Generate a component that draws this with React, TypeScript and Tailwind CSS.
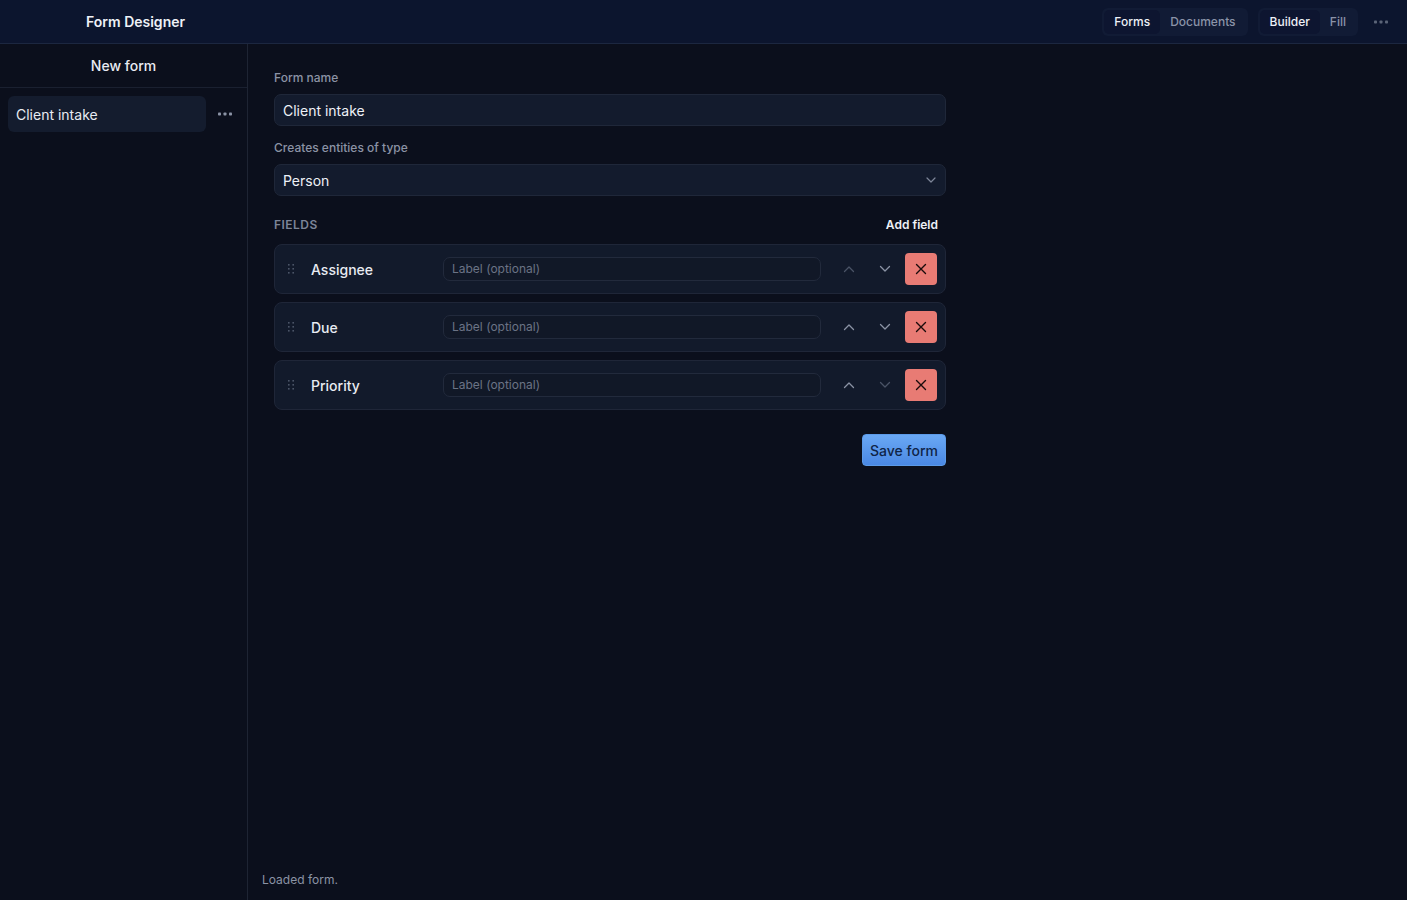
import React from "react";

const font = { fontFamily: "Inter, 'Noto Sans', sans-serif" };

function Dots({ className = "" }: { className?: string }) {
  return (
    <svg width="14" height="4" viewBox="0 0 14 4" className={className}>
      <rect x="0" y="0.5" width="3" height="3" rx="0.8" fill="currentColor" />
      <rect x="5.5" y="0.5" width="3" height="3" rx="0.8" fill="currentColor" />
      <rect x="11" y="0.5" width="3" height="3" rx="0.8" fill="currentColor" />
    </svg>
  );
}

function Grip() {
  return (
    <svg width="6" height="11" viewBox="0 0 6 11" className="text-[#4b5568]">
      {[0, 4, 8].map((y) => (
        <g key={y}>
          <rect x="0" y={y} width="1.6" height="1.6" fill="currentColor" />
          <rect x="4.4" y={y} width="1.6" height="1.6" fill="currentColor" />
        </g>
      ))}
    </svg>
  );
}

function Chevron({ up, dim }: { up?: boolean; dim?: boolean }) {
  return (
    <svg width="12" height="8" viewBox="0 0 12 8" className={dim ? "text-[#4a5366]" : "text-[#8b93a5]"}>
      <path d={up ? "M1.5 6.5 L6 2 L10.5 6.5" : "M1.5 1.5 L6 6 L10.5 1.5"} fill="none" stroke="currentColor" strokeWidth="1.3" strokeLinecap="round" strokeLinejoin="round" />
    </svg>
  );
}

function XIcon() {
  return (
    <svg width="12" height="12" viewBox="0 0 12 12">
      <path d="M1.5 1.5 L10.5 10.5 M10.5 1.5 L1.5 10.5" stroke="#1a0b0b" strokeWidth="1.4" strokeLinecap="round" />
    </svg>
  );
}

function FieldRow({ name, upDim, downDim }: { name: string; upDim?: boolean; downDim?: boolean }) {
  return (
    <div className="flex h-[50px] items-center rounded-[8px] border border-[#1f2638] bg-[#121a2b] pl-[13px] pr-[8px]">
      <Grip />
      <div className="ml-[17px] w-[132px] text-[14px] font-medium text-[#e8ebf2]">{name}</div>
      <div className="flex h-[24px] w-[378px] items-center rounded-[7px] border border-[#222a3c] bg-[#111827] px-[8px] text-[12px] text-[#6b7385]">
        Label (optional)
      </div>
      <div className="ml-auto flex items-center">
        <div className="flex h-[32px] w-[36px] items-center justify-center"><Chevron up dim={upDim} /></div>
        <div className="mr-[2px] flex h-[32px] w-[36px] items-center justify-center"><Chevron dim={downDim} /></div>
        <div className="flex h-[32px] w-[32px] items-center justify-center rounded-[4px] bg-[#e87b74]"><XIcon /></div>
      </div>
    </div>
  );
}

export default function App() {
  return (
    <div style={font} className="flex h-[900px] w-full flex-col bg-[#0b0f1c] text-white">
      <header className="flex h-[44px] shrink-0 items-center border-b border-[#1c2740] bg-[#0c152e] pl-[86px] pr-[19px]">
        <div className="text-[14px] font-semibold text-[#eef1f7]">Form Designer</div>
        <div className="ml-auto flex items-center gap-[10px]">
          <div className="flex h-[28px] items-center rounded-[6px] bg-[#111b35] p-[2px] text-[12px] font-medium">
            <div className="flex h-full items-center rounded-[5px] bg-[#0d1530] px-[10px] text-[#eef1f7]">Forms</div>
            <div className="flex h-full items-center px-[10px] text-[#8a93a8]">Documents</div>
          </div>
          <div className="flex h-[28px] items-center rounded-[6px] bg-[#111b35] p-[2px] text-[12px] font-medium">
            <div className="flex h-full items-center rounded-[5px] bg-[#0d1530] px-[10px] text-[#eef1f7]">Builder</div>
            <div className="flex h-full items-center px-[10px] text-[#8a93a8]">Fill</div>
          </div>
          <Dots className="ml-[6px] text-[#5b6478]" />
        </div>
      </header>
      <div className="flex min-h-0 flex-1">
        <aside className="flex w-[248px] shrink-0 flex-col border-r border-[#1e2433] bg-[#0b0f1c]">
          <div className="flex h-[44px] items-center justify-center border-b border-[#1a2030] text-[14px] font-medium text-[#e8ebf2]">
            New form
          </div>
          <div className="flex items-center px-[8px] pt-[8px]">
            <div className="flex h-[36px] w-[198px] items-center rounded-[6px] bg-[#141c2e] px-[8px] text-[14px] text-[#e8ebf2]">
              Client intake
            </div>
            <Dots className="ml-[12px] text-[#8b93a5]" />
          </div>
        </aside>
        <main className="flex min-w-0 flex-1 flex-col bg-[#0b0f1c]">
          <div className="flex-1 pl-[26px] pt-[25px]">
            <div className="flex w-[672px] flex-col">
              <div className="text-[12px] font-medium text-[#8b93a5]">Form name</div>
              <div className="mt-[7px] flex h-[32px] items-center rounded-[7px] border border-[#1f2739] bg-[#131b2d] px-[8px] text-[14px] text-[#eef1f7]">
                Client intake
              </div>
              <div className="mt-[13px] text-[12px] font-medium text-[#8b93a5]">Creates entities of type</div>
              <div className="mt-[7px] flex h-[32px] items-center rounded-[7px] border border-[#1f2739] bg-[#131b2d] pl-[8px] pr-[9px] text-[14px] text-[#eef1f7]">
                Person
                <svg width="10" height="6" viewBox="0 0 10 6" className="ml-auto text-[#7d8598]">
                  <path d="M1 1 L5 5 L9 1" fill="none" stroke="currentColor" strokeWidth="1.2" strokeLinecap="round" strokeLinejoin="round" />
                </svg>
              </div>
              <div className="mt-[20px] flex items-center justify-between pr-[8px]">
                <div className="text-[12px] font-semibold tracking-[0.04em] text-[#7d8598]">FIELDS</div>
                <div className="text-[12px] font-semibold text-[#eef1f7]">Add field</div>
              </div>
              <div className="mt-[10px] flex flex-col gap-[8px]">
                <FieldRow name="Assignee" upDim />
                <FieldRow name="Due" />
                <FieldRow name="Priority" downDim />
              </div>
              <div className="mt-[24px] flex justify-end">
                <div className="flex h-[32px] items-center rounded-[4px] border border-[#5c9ae8] bg-gradient-to-b from-[#6aa8f4] to-[#4a88e4] px-[7px] text-[14px] font-medium text-[#0f2447]">
                  Save form
                </div>
              </div>
            </div>
          </div>
          <div className="h-[40px] shrink-0 pl-[14px] pt-[11px] text-[12px] text-[#8b93a5]">Loaded form.</div>
        </main>
      </div>
    </div>
  );
}
